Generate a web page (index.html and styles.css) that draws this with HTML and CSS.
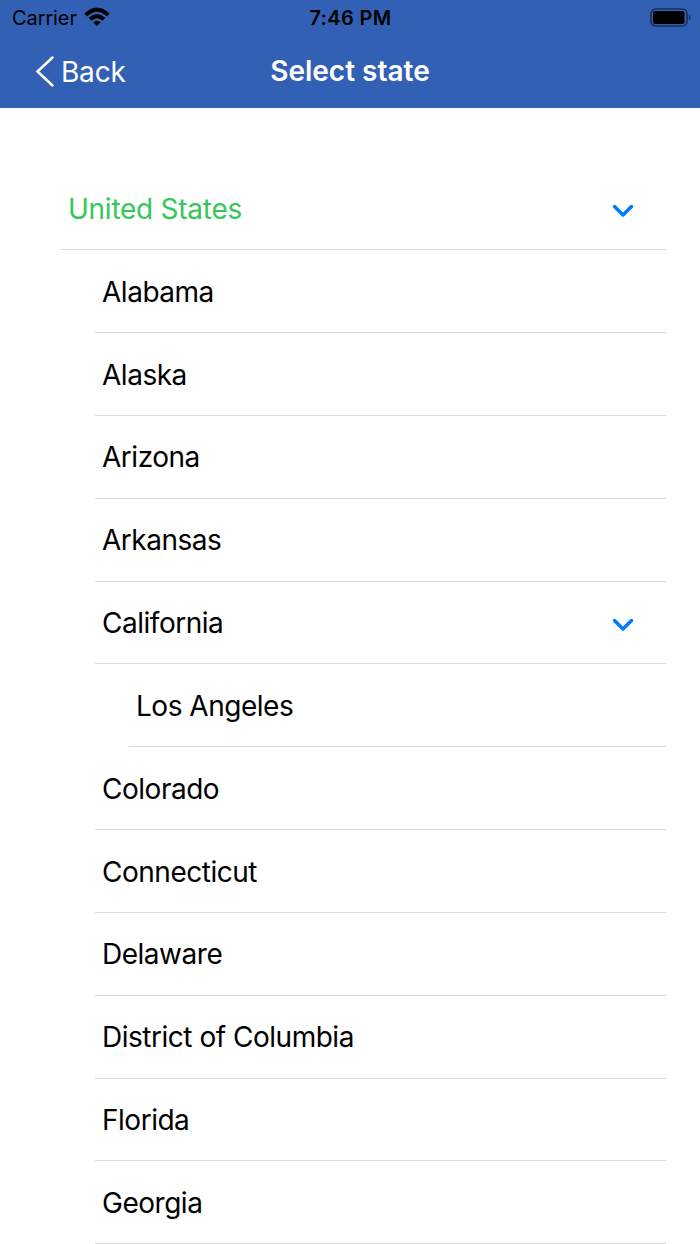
FILE: index.html
```html
<!DOCTYPE html>
<html lang="en">
<head>
<meta charset="utf-8">
<title>Select state</title>
<link rel="stylesheet" href="styles.css">
</head>
<body>
<header class="header">
  <div class="status">
    <div class="carrier"><span class="carrier-name">Carrier</span>
      <svg class="wifi" width="26" height="20" viewBox="0 0 26 20"><path d="M13 19 L9.200 15.300 Q13 12.200 16.800 15.300 Z"/><path d="M6 12.300 Q13 6 20 12.300M1.700 8 Q13 -2.800 24.300 8" fill="none" stroke="#000" stroke-width="3.900"/></svg>
    </div>
    <time class="clock">7:46 PM</time>
    <svg class="battery" width="42" height="20" viewBox="0 0 42 20"><rect x="1" y="1" width="36" height="17" rx="4.500" fill="none" stroke="#000" stroke-opacity=".5" stroke-width="1.700"/><rect x="3" y="3" width="31.500" height="13" rx="2"/><path d="M39 6.500 Q42.500 9.500 39 12.500Z" fill-opacity=".5"/></svg>
  </div>
  <nav class="nav">
    <a class="back"><svg width="20" height="32" viewBox="0 0 20 32"><path d="M17.500 1.500 L2.500 15.500 L17.500 29.500" fill="none" stroke="#fff" stroke-width="2.500" stroke-linecap="round"/></svg><span class="back-label">Back</span></a>
    <h1 class="title">Select state</h1>
  </nav>
</header>
<main class="list">
  <div class="row country"><span class="label">United States</span><svg class="chevron" width="22" height="14" viewBox="0 0 22 14"><path d="M2.500 2.500 L11 11 L19.500 2.500" /></svg></div>
  <div class="row state"><span class="label">Alabama</span></div>
  <div class="row state"><span class="label">Alaska</span></div>
  <div class="row state"><span class="label">Arizona</span></div>
  <div class="row state"><span class="label">Arkansas</span></div>
  <div class="row state"><span class="label">California</span><svg class="chevron" width="22" height="14" viewBox="0 0 22 14"><path d="M2.500 2.500 L11 11 L19.500 2.500" /></svg></div>
  <div class="row city"><span class="label">Los Angeles</span></div>
  <div class="row state"><span class="label">Colorado</span></div>
  <div class="row state"><span class="label">Connecticut</span></div>
  <div class="row state"><span class="label">Delaware</span></div>
  <div class="row state"><span class="label">District of Columbia</span></div>
  <div class="row state"><span class="label">Florida</span></div>
  <div class="row state"><span class="label">Georgia</span></div>
</main>
</body>
</html>
```

FILE: styles.css
```css
* { box-sizing: border-box; }
body { margin: 0; height: 1244px; overflow: hidden; background: #fff; color: #000; font-family: Inter, "Liberation Sans", sans-serif; }
.header { height: 108px; background: #3260b4; }
.status { height: 36px; display: grid; grid-template-columns: 1fr auto 1fr; align-items: center; padding: 0 8px 0 12px; }
.carrier { display: flex; align-items: center; gap: 7px; font-size: 20px; letter-spacing: -.1px; }
.wifi { margin-top: -3px; }
.clock { font-size: 20px; font-weight: 600; letter-spacing: .35px; margin-left: -3px; }
.battery { justify-self: end; margin-top: -1px; }
.nav { height: 72px; display: grid; grid-template-columns: 1fr auto 1fr; align-items: center; padding: 0 35px; color: #fff; }
.back { display: flex; align-items: center; gap: 6px; font-size: 28px; letter-spacing: -.2px; }
.title { margin: -2px 0 0; font-size: 28px; font-weight: 600; }
.list { padding: 59.6px 34px 0 61px; }
.row { height: 82.82px; display: flex; align-items: center; justify-content: space-between; border-bottom: 1px solid #d9d9db; padding: 1px 32px 0 7px; font-size: 28px; letter-spacing: -.48px; }
.country { color: #34c759; letter-spacing: -.26px; }
.state { margin-left: 34px; }
.city { margin-left: 68px; }
.chevron { margin-top: 4px; fill: none; stroke: #007aff; stroke-width: 3.5; stroke-linecap: round; stroke-linejoin: round; }
```
